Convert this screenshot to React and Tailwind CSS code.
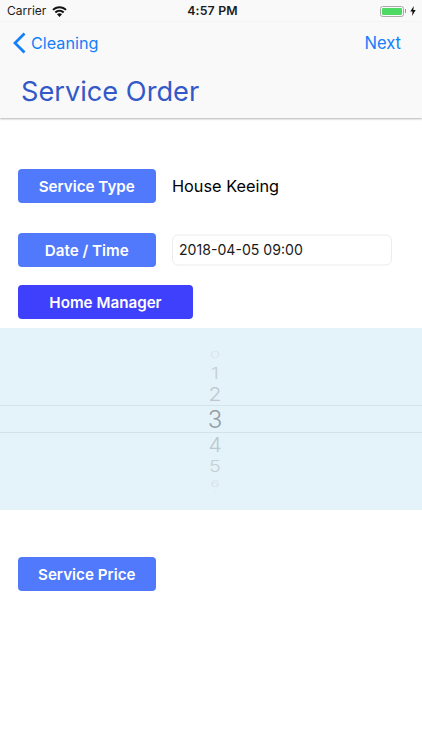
const CHEVRON = "M11.5 1.5L2 11l9.5 9.5";

function Label({ children, className = "w-[137.5px] bg-[#5079fb]" }) {
  return (
    <div className={`flex h-[34px] shrink-0 items-center justify-center rounded-[4px] text-[15.2px] font-semibold text-white ${className}`}>
      <span className="pt-[2px]">{children}</span>
    </div>
  );
}

function StatusBar() {
  return (
    <div className="flex h-[22px] items-center justify-between pl-[7px] pr-[6px] text-[#1c1c1e]">
      <div className="flex w-[140px] items-center gap-[6px] text-[12px]">
        <span>Carrier</span>
        <svg width="15" height="11" viewBox="0 0 15 11" fill="#111">
          <path d="M7.5 0.3C4.7 0.3 2.2 1.4 0.3 3.2L1.6 4.6C3.1 3.1 5.2 2.2 7.5 2.2s4.4 0.9 5.9 2.4l1.3-1.4C12.8 1.4 10.3 0.3 7.5 0.3z" />
          <path d="M7.5 3.8C5.6 3.8 3.9 4.5 2.7 5.8l1.3 1.4c0.9-0.9 2.1-1.5 3.5-1.5s2.6 0.6 3.5 1.5l1.3-1.4C11.1 4.5 9.4 3.8 7.5 3.8z" />
          <path d="M7.5 7.3c-1 0-1.9 0.4-2.5 1l2.5 2.6 2.5-2.6c-0.6-0.6-1.5-1-2.5-1z" />
        </svg>
      </div>
      <span className="pl-[2px] text-[12.3px] font-semibold tracking-[0.2px]">4:57 PM</span>
      <div className="flex w-[140px] items-center justify-end gap-[1px]">
        <div className="flex h-[11px] w-[24px] items-center rounded-[2.5px] border border-[#aaa] p-[1px]">
          <div className="h-full w-full rounded-[1px] bg-[#4cd964]" />
        </div>
        <div className="mr-[3px] h-[4px] w-[1px] bg-[#999]" />
        <svg width="6" height="10" viewBox="0 0 6 10" fill="#111">
          <path d="M3.8 0L0.3 5.6h2.2L2 10l3.7-6H3.3z" />
        </svg>
      </div>
    </div>
  );
}

function NavBar() {
  return (
    <div className="h-[96px] bg-[#f9f9f9] shadow-[0_1px_2px_rgba(0,0,0,0.3)]">
      <div className="flex h-[42px] items-center justify-between pl-[13px] pr-[21px] text-[#157efb]">
        <div className="flex items-center gap-[5px] text-[16.2px]">
          <svg width="13" height="22" viewBox="0 0 13 22" fill="none" stroke="#157efb" strokeWidth="2.8">
            <path d={CHEVRON} />
          </svg>
          <span>Cleaning</span>
        </div>
        <span className="text-[16.6px]">Next</span>
      </div>
      <h1 className="pl-[21px] pt-[8px] text-[27.2px] leading-[40px] font-normal text-[#3358c7]">
        Service Order
      </h1>
    </div>
  );
}

const pickerRows = [
  { n: "0", h: "h-[15px]", cls: "text-[17px] scale-y-[0.5] text-[#cfd8dc]/60" },
  { n: "1", h: "h-[20px]", cls: "text-[20px] scale-y-[0.82] text-[#c5ced2]" },
  { n: "2", h: "h-[23px]", cls: "text-[21px] scale-y-[0.92] text-[#bdc7cc]" },
  { n: "3", h: "h-[27px]", cls: "text-[24px] text-[#949da2]" },
  { n: "4", h: "h-[22px]", cls: "text-[21px] scale-y-[0.95] text-[#bdc7cc]" },
  { n: "5", h: "h-[21px]", cls: "text-[20px] scale-y-[0.82] text-[#c5ced2]" },
  { n: "6", h: "h-[15px]", cls: "text-[15px] scale-y-[0.6] text-[#cfd8dc]/70" },
  { n: "7", h: "h-[6px]", cls: "text-[6px] scale-y-[0.5] text-[#cfd8dc]/40" },
];

function Picker() {
  return (
    <div className="relative mt-[9px] flex h-[182px] flex-col items-center bg-[#e4f3f9] pl-[8px] pt-[20px] font-light">
      <div className="absolute left-0 right-0 top-[77px] h-[28px] border-y border-[#d3e3e9]" />
      {pickerRows.map((r) => (
        <div key={r.n} className={`flex w-full items-center justify-center ${r.h}`}>
          <span className={`leading-none ${r.cls}`}>{r.n}</span>
        </div>
      ))}
    </div>
  );
}

export default function App() {
  return (
    <div className="h-[750px] w-[422px] overflow-hidden bg-white font-['Inter','Liberation_Sans',sans-serif]">
      <div className="bg-[#f9f9f9]">
        <StatusBar />
      </div>
      <NavBar />

      <div className="flex items-center gap-[16.5px] pl-[18px] pt-[51px]">
        <Label>Service Type</Label>
        <span className="pt-[1px] text-[16.3px] text-black">House Keeing</span>
      </div>

      <div className="flex items-center gap-[16.5px] pl-[18px] pt-[30px]">
        <Label>Date / Time</Label>
        <div className="flex h-[31px] w-[220px] -translate-y-[0.5px] items-center rounded-[6px] border border-[#ececec] pb-[1px] pl-[6px] text-[14.1px] text-[#1a1a1a]">
          2018-04-05 09:00
        </div>
      </div>

      <div className="pl-[18px] pt-[18px]">
        <Label className="w-[175px] bg-[#3f40fb]">Home Manager</Label>
      </div>

      <Picker />

      <div className="pl-[18px] pt-[47px]">
        <Label>Service Price</Label>
      </div>
    </div>
  );
}
